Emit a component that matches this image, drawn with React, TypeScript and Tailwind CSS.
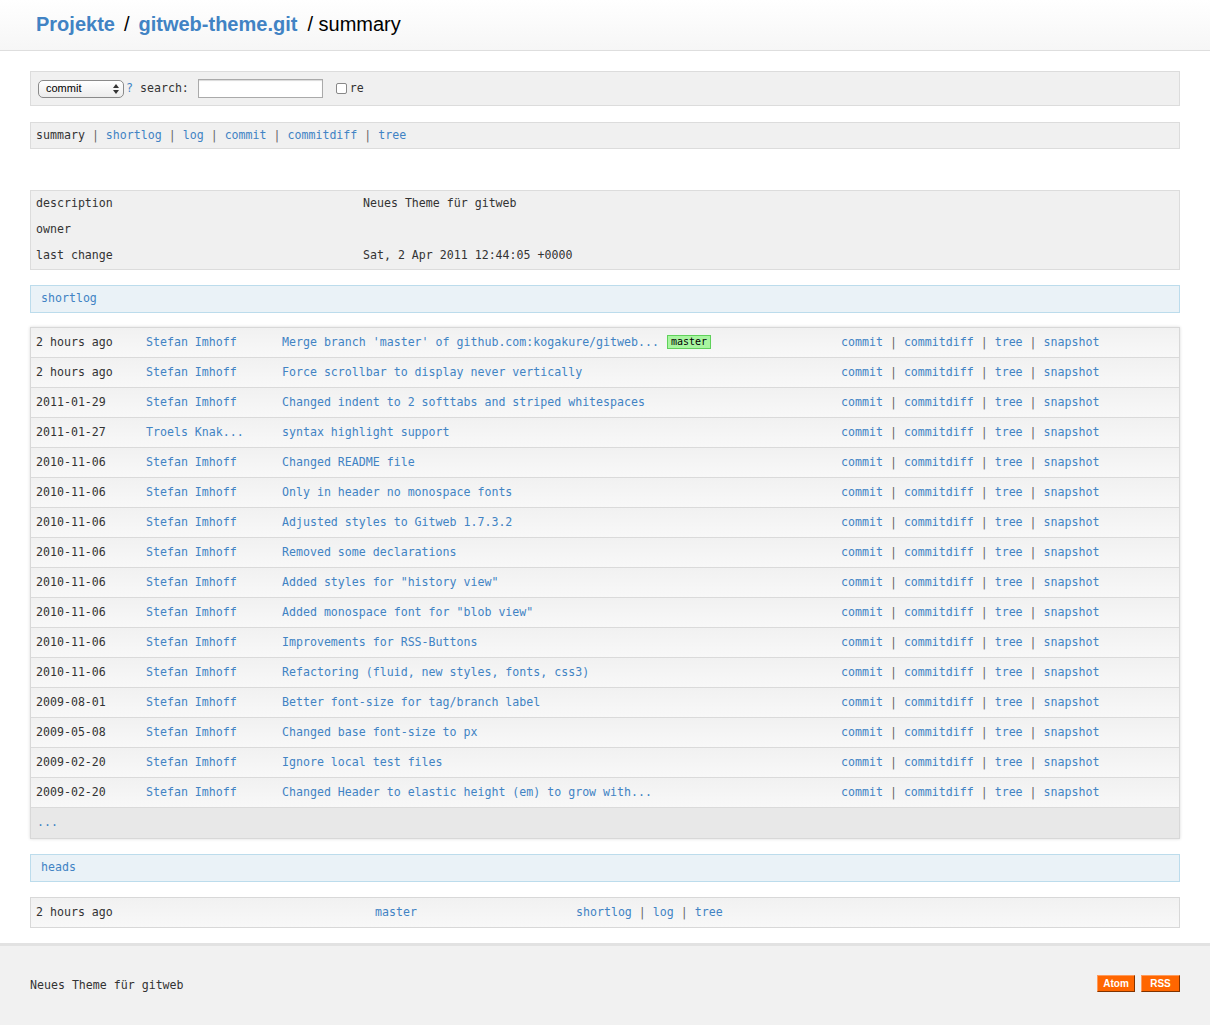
const mono = "font-['DejaVu_Sans_Mono',monospace] text-[11.6px]";

const commits = [
  ["2 hours ago", "Stefan Imhoff", "Merge branch 'master' of github.com:kogakure/gitweb...", true],
  ["2 hours ago", "Stefan Imhoff", "Force scrollbar to display never vertically", false],
  ["2011-01-29", "Stefan Imhoff", "Changed indent to 2 softtabs and striped whitespaces", false],
  ["2011-01-27", "Troels Knak...", "syntax highlight support", false],
  ["2010-11-06", "Stefan Imhoff", "Changed README file", false],
  ["2010-11-06", "Stefan Imhoff", "Only in header no monospace fonts", false],
  ["2010-11-06", "Stefan Imhoff", "Adjusted styles to Gitweb 1.7.3.2", false],
  ["2010-11-06", "Stefan Imhoff", "Removed some declarations", false],
  ["2010-11-06", "Stefan Imhoff", 'Added styles for "history view"', false],
  ["2010-11-06", "Stefan Imhoff", 'Added monospace font for "blob view"', false],
  ["2010-11-06", "Stefan Imhoff", "Improvements for RSS-Buttons", false],
  ["2010-11-06", "Stefan Imhoff", "Refactoring (fluid, new styles, fonts, css3)", false],
  ["2009-08-01", "Stefan Imhoff", "Better font-size for tag/branch label", false],
  ["2009-05-08", "Stefan Imhoff", "Changed base font-size to px", false],
  ["2009-02-20", "Stefan Imhoff", "Ignore local test files", false],
  ["2009-02-20", "Stefan Imhoff", "Changed Header to elastic height (em) to grow with...", false],
] as const;

function Links({ items }: { items: string[] }) {
  return (
    <span className="flex items-center">
      {items.map((l, i) => (
        <span key={l} className="flex items-center">
          {i > 0 && <span className="px-[7px] text-[#666]">|</span>}
          <a className="text-[#4183c4]">{l}</a>
        </span>
      ))}
    </span>
  );
}

function SectionTitle({ children }: { children: string }) {
  return (
    <div className="h-[28px] border border-[#bcdcec] bg-[#eaf2f7] pl-[10px] flex items-center text-[#4183c4]">
      {children}
    </div>
  );
}

export default function App() {
  return (
    <div className={`${mono} bg-white text-[#333] min-h-[1025px] flex flex-col`}>
      {/* header */}
      <div className="h-[51px] bg-gradient-to-b from-white to-[#f6f6f6] border-b border-[#dedede] flex items-center pl-[36px] pb-[3px] font-['Liberation_Sans',Arial,sans-serif] text-[20px]">
        <a className="font-bold text-[#4183c4]">Projekte</a>
        <span className="px-[9px] text-black">/</span>
        <a className="font-bold text-[#4183c4]">gitweb-theme.git</a>
        <span className="pl-[10px] text-black">/ summary</span>
      </div>

      <div className="px-[30px] pt-[20px] pb-[15px] w-[1210px]">
        {/* search */}
        <div className="h-[35px] border border-[#dcdcdc] bg-[#f0f0f0] flex items-center pl-[7px]">
          <div className="w-[86px] h-[18px] rounded-[5px] border border-[#8a8a8a] bg-gradient-to-b from-white to-[#ececec] flex items-center justify-between pl-[7px] pr-[4px] font-['Liberation_Sans',Arial,sans-serif] text-[11px] text-black">
            <span>commit</span>
            <svg width="6" height="10" viewBox="0 0 6 10"><path d="M3 0 L6 4 H0 Z M3 10 L6 6 H0 Z" fill="#333" /></svg>
          </div>
          <span className="text-[#4183c4] ml-[2px]">?</span>
          <span className="ml-[7px]">search:</span>
          <div className="ml-[9px] w-[125px] h-[19px] bg-white border border-[#aaa] shadow-[inset_0_1px_1px_rgba(0,0,0,0.15)]" />
          <div className="ml-[13px] w-[11px] h-[11px] rounded-[2px] border border-[#888] bg-white" />
          <span className="ml-[3px]">re</span>
        </div>

        {/* nav */}
        <div className="mt-[16px] h-[27px] border border-[#dcdcdc] bg-[#f0f0f0] flex items-center pl-[5px]">
          <span>summary</span>
          <span className="px-[7px] text-[#666]">|</span>
          <Links items={["shortlog", "log", "commit", "commitdiff", "tree"]} />
        </div>

        {/* projects_list */}
        <div className="mt-[41px] border border-[#dcdcdc] bg-[#f0f0f0] pl-[5px]">
          {[
            ["description", "Neues Theme für gitweb"],
            ["owner", ""],
            ["last change", "Sat, 2 Apr 2011 12:44:05 +0000"],
          ].map(([k, v]) => (
            <div key={k} className="h-[26px] flex items-center">
              <span className="w-[327px]">{k}</span>
              <span>{v}</span>
            </div>
          ))}
        </div>

        <div className="mt-[15px]">
          <SectionTitle>shortlog</SectionTitle>
        </div>

        {/* shortlog */}
        <div className="mt-[14px] border border-[#d8d8d8] shadow-[0_0_3px_rgba(0,0,0,0.15)]">
          {commits.map(([date, author, title, head], i) => (
            <div
              key={i}
              className="h-[30px] grid grid-cols-[110px_136px_559px_1fr] items-center pl-[5px] border-b border-[#dadada] bg-gradient-to-b from-[#f1f1f1] to-[#f8f8f8]"
            >
              <span>{date}</span>
              <a className="text-[#4183c4]">{author}</a>
              <span className="flex items-center">
                <a className="text-[#4183c4]">{title}</a>
                {head && (
                  <span className="ml-[8px] h-[14px] px-[3px] flex items-center bg-[#a8f5a0] border border-[#5fd15a] text-[10px] text-black leading-none">
                    master
                  </span>
                )}
              </span>
              <Links items={["commit", "commitdiff", "tree", "snapshot"]} />
            </div>
          ))}
          <div className="h-[30px] flex items-center pl-[6px] bg-[#e8e8e8] text-[#4183c4]">...</div>
        </div>

        <div className="mt-[15px]">
          <SectionTitle>heads</SectionTitle>
        </div>

        {/* heads */}
        <div className="mt-[15px] h-[31px] border border-[#d8d8d8] bg-gradient-to-b from-[#f1f1f1] to-[#f8f8f8] grid grid-cols-[339px_201px_1fr] items-center pl-[5px]">
          <span>2 hours ago</span>
          <a className="text-[#4183c4]">master</a>
          <Links items={["shortlog", "log", "tree"]} />
        </div>
      </div>

      {/* footer */}
      <div className="flex-1 border-t-[3px] border-[#e2e2e2] bg-[#f1f1f1] flex items-start justify-between px-[30px] pt-[29px] pb-[30px]">
        <span className="pt-[2px]">Neues Theme für gitweb</span>
        <div className="flex gap-[6px] font-['Liberation_Sans',Arial,sans-serif] text-[10px] font-bold text-white">
          <span className="w-[38px] h-[17px] flex items-center justify-center bg-[#ff6600] border-t border-l border-[#ff9a5a] border-r border-b border-r-[#803300] border-b-[#803300]">
            Atom
          </span>
          <span className="w-[39px] h-[17px] flex items-center justify-center bg-[#ff6600] border-t border-l border-[#ff9a5a] border-r border-b border-r-[#803300] border-b-[#803300]">
            RSS
          </span>
        </div>
      </div>
    </div>
  );
}
